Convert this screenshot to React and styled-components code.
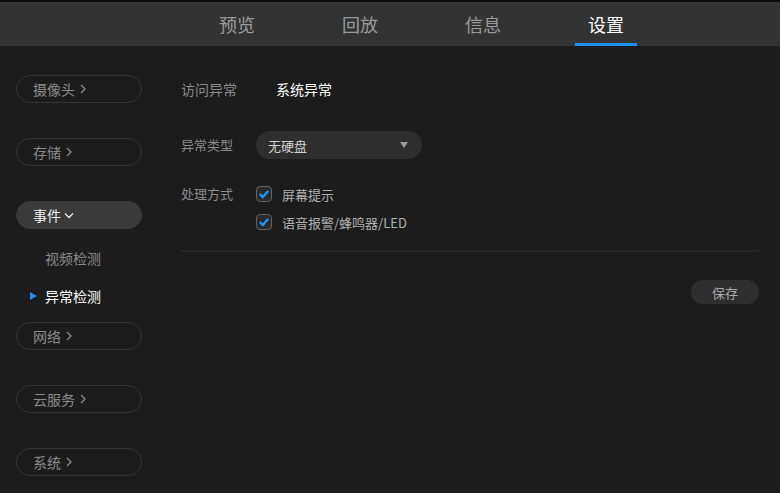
import React from 'react';
import styled, { createGlobalStyle } from 'styled-components';

const GlobalStyle = createGlobalStyle`
  html, body {
    margin: 0;
    padding: 0;
    background: #1c1c1c;
  }
  body {
    font-family: "Noto Sans CJK SC", "Noto Sans", sans-serif;
  }
`;

const Page = styled.div`
  width: 780px;
  height: 493px;
  background: #1c1c1c;
  overflow: hidden;
  border-top: 2px solid #0a0a0a;
  box-sizing: border-box;
`;

const Header = styled.div`
  height: 44px;
  background: #333333;
  display: flex;
  padding-left: 206px;
  gap: 61px;
`;

const Tab = styled.div`
  width: 62px;
  height: 44px;
  box-sizing: border-box;
  display: flex;
  align-items: center;
  justify-content: center;
  font-size: 18px;
  color: ${p => (p.$active ? '#ffffff' : '#9a9a9a')};
  border-bottom: 3px solid ${p => (p.$active ? '#1e8ff0' : 'transparent')};
  padding-top: 2px;
`;

const Body = styled.div`
  display: flex;
`;

const Sidebar = styled.div`
  width: 165px;
  padding: 29px 0 0 16px;
  box-sizing: border-box;
  display: flex;
  flex-direction: column;
`;

const Pill = styled.div`
  width: 126px;
  height: 28px;
  box-sizing: border-box;
  border-radius: 14px;
  border: 1px solid ${p => (p.$open ? '#3a3a3a' : '#353535')};
  background: ${p => (p.$open ? '#3a3a3a' : 'transparent')};
  color: ${p => (p.$open ? '#f0f0f0' : '#8a8a8a')};
  font-size: 14px;
  display: flex;
  align-items: center;
  padding-left: 16px;
  gap: 3px;
  margin-bottom: 35px;
`;

const SubList = styled.div`
  display: flex;
  flex-direction: column;
  margin-top: -25px;
  margin-bottom: 7px;
`;

const SubItem = styled.div`
  height: 38px;
  display: flex;
  align-items: center;
  font-size: 14px;
  padding-left: 29px;
  color: ${p => (p.$active ? '#ffffff' : '#8a8a8a')};
  position: relative;
`;

const Marker = styled.span`
  position: absolute;
  left: 14px;
  top: 15px;
  width: 0;
  height: 0;
  border-top: 4px solid transparent;
  border-bottom: 4px solid transparent;
  border-left: 7px solid #1e8ff0;
`;

const Content = styled.div`
  flex: 1;
  padding: 32px 21px 0 16px;
  display: flex;
  flex-direction: column;
`;

const SubTabs = styled.div`
  display: flex;
  gap: 39px;
  font-size: 14px;
  height: 22px;
  align-items: center;
`;

const SubTab = styled.span`
  color: ${p => (p.$active ? '#ffffff' : '#8a8a8a')};
`;

const Row = styled.div`
  display: flex;
  align-items: ${p => (p.$top ? 'flex-start' : 'center')};
  margin-top: ${p => p.$mt}px;
`;

const Label = styled.div`
  width: 75px;
  font-size: 13px;
  color: #8a8a8a;
  line-height: 20px;
`;

const Select = styled.div`
  width: 166px;
  height: 28px;
  border-radius: 14px;
  background: #2e2e2e;
  display: flex;
  align-items: center;
  justify-content: space-between;
  padding: 0 12px;
  box-sizing: border-box;
  font-size: 13px;
  color: #d0d0d0;
`;

const Caret = styled.span`
  width: 0;
  height: 0;
  border-left: 4px solid transparent;
  border-right: 4px solid transparent;
  border-top: 6px solid #9a9a9a;
  margin-right: 2px;
`;

const Checks = styled.div`
  display: flex;
  flex-direction: column;
  gap: 8px;
`;

const CheckRow = styled.label`
  display: flex;
  align-items: center;
  gap: 10px;
  font-size: 13px;
  color: #b0b0b0;
  height: 20px;
`;

const Box = styled.span`
  width: 16px;
  height: 16px;
  box-sizing: border-box;
  border: 1.5px solid #626262;
  border-radius: 4px;
  background: #2a2a2a;
  display: flex;
  align-items: center;
  justify-content: center;
`;

const Divider = styled.div`
  height: 2px;
  background: #262626;
  margin-top: 18px;
`;

const Actions = styled.div`
  display: flex;
  justify-content: flex-end;
  margin-top: 28px;
`;

const SaveButton = styled.button`
  width: 68px;
  height: 24px;
  border: none;
  border-radius: 12px;
  background: #2e2e2e;
  color: #a8a8a8;
  font-family: inherit;
  font-size: 13px;
  padding: 0;
`;

const Chevron = ({ down }) => (
  <svg width="10" height="12" viewBox="0 0 10 12">
    <path
      d={down ? 'M1 4.5 L5 8.5 L9 4.5' : 'M3 2 L7 6 L3 10'}
      fill="none"
      stroke="currentColor"
      strokeWidth="1.3"
    />
  </svg>
);

const Check = () => (
  <svg width="12" height="12" viewBox="0 0 12 12">
    <path d="M1.8 6 L4.8 9 L10.2 3" fill="none" stroke="#2196f3" strokeWidth="2.4" />
  </svg>
);

const tabs = ['预览', '回放', '信息', '设置'];

export default function App() {
  return (
    <>
      <GlobalStyle />
      <Page>
        <Header>
          {tabs.map(t => (
            <Tab key={t} $active={t === '设置'}>{t}</Tab>
          ))}
        </Header>
        <Body>
          <Sidebar>
            <Pill>摄像头<Chevron /></Pill>
            <Pill>存储<Chevron /></Pill>
            <Pill $open>事件<Chevron down /></Pill>
            <SubList>
              <SubItem>视频检测</SubItem>
              <SubItem $active><Marker />异常检测</SubItem>
            </SubList>
            <Pill>网络<Chevron /></Pill>
            <Pill>云服务<Chevron /></Pill>
            <Pill>系统<Chevron /></Pill>
          </Sidebar>
          <Content>
            <SubTabs>
              <SubTab>访问异常</SubTab>
              <SubTab $active>系统异常</SubTab>
            </SubTabs>
            <Row $mt={31}>
              <Label>异常类型</Label>
              <Select>无硬盘<Caret /></Select>
            </Row>
            <Row $top $mt={25}>
              <Label>处理方式</Label>
              <Checks>
                <CheckRow><Box><Check /></Box>屏幕提示</CheckRow>
                <CheckRow><Box><Check /></Box>语音报警/蜂鸣器/LED</CheckRow>
              </Checks>
            </Row>
            <Divider />
            <Actions>
              <SaveButton>保存</SaveButton>
            </Actions>
          </Content>
        </Body>
      </Page>
    </>
  );
}
